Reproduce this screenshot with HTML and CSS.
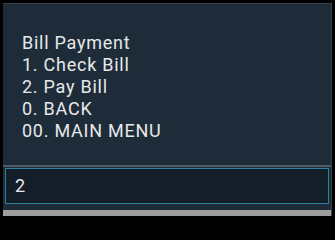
FILE: index.html
```html
<!DOCTYPE html>
<html>
<head>
<meta charset="utf-8">
<link rel="stylesheet" href="styles.css">
</head>
<body>
<div class="dialog">
  <div class="message">
    <div>Bill Payment</div>
    <div>1. Check Bill</div>
    <div>2. Pay Bill</div>
    <div>0. BACK</div>
    <div>00. MAIN MENU</div>
  </div>
  <div class="input-area">
    <div class="input">2</div>
  </div>
  <div class="buttons"></div>
</div>
</body>
</html>
```
FILE: styles.css
```css
html, body {
  margin: 0;
  padding: 0;
  background: #000;
  width: 335px;
  height: 216px;
  overflow: hidden;
}
body {
  padding: 3px 3px 0 3px;
  box-sizing: border-box;
  font-family: Roboto, "Liberation Sans", sans-serif;
}
.dialog {
  display: flex;
  flex-direction: column;
  height: 213px;
  background: #1e2c39;
  border-top: 1px solid #34414d;
  border-right: 1px solid #34414d;
  box-sizing: border-box;
}
.message {
  height: 163px;
  box-sizing: border-box;
  padding: 28px 0 0 19px;
  color: #e6e8ea;
  font-size: 18px;
  line-height: 22px;
  letter-spacing: 0.75px;
  border-bottom: 2px solid #4f5b66;
}
.input-area {
  padding: 1px 2px 6px 2px;
  height: 43px;
  box-sizing: border-box;
}
.input {
  height: 36px;
  box-sizing: border-box;
  background: #141e28;
  border: 1.5px solid #2e7f9c;
  color: #e6e8ea;
  font-size: 18px;
  line-height: 33px;
  padding-left: 9px;
}
.buttons {
  flex: 1;
  background: #9e9e9e;
}
```
